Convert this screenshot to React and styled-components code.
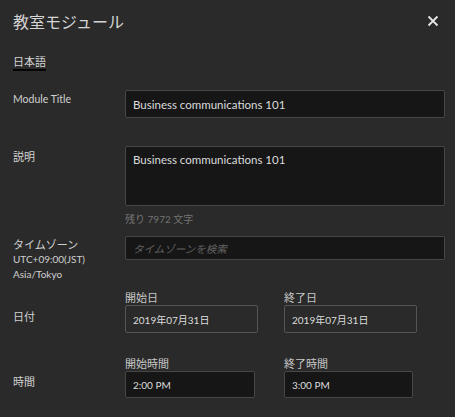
import React from 'react';
import styled, { createGlobalStyle } from 'styled-components';

const Global = createGlobalStyle`
  html, body {
    margin: 0;
    padding: 0;
    background: #2a2a2a;
  }
  body {
    font-family: Lato, "Noto Sans CJK JP", sans-serif;
    color: #d2d2d2;
  }
`;

const Modal = styled.div`
  width: 455px;
  height: 417px;
  box-sizing: border-box;
  padding: 0 10px 0 13px;
  background: #2a2a2a;
  overflow: hidden;
`;

const Header = styled.div`
  display: flex;
  justify-content: space-between;
  align-items: center;
  height: 40px;
  padding-top: 1px;
`;

const Title = styled.h1`
  margin: 0;
  font-family: "Noto Sans CJK JP", sans-serif;
  font-weight: 400;
  font-size: 16px;
  color: #d4d4d4;
`;

const Close = styled.button`
  border: 0;
  background: none;
  padding: 0;
  margin-right: 6px;
  width: 12px;
  height: 12px;
  display: flex;
  color: #e6e6e6;
  cursor: pointer;
`;

const Tabs = styled.div`
  display: flex;
  margin-top: 13px;
`;

const Tab = styled.div`
  font-family: "Noto Sans CJK JP", sans-serif;
  font-size: 11px;
  line-height: 14px;
  padding-bottom: 1px;
  border-bottom: 2px solid #050505;
  color: #d4d4d4;
`;

const Row = styled.div`
  display: grid;
  grid-template-columns: 112px 320px;
  align-items: ${p => (p.center ? 'end' : 'start')};
  margin-top: ${p => p.gap}px;
`;

const Label = styled.div`
  font-size: ${p => (p.jp ? 11 : 10.5)}px;
  line-height: 16px;
  padding-top: ${p => p.top || 0}px;
  padding-bottom: ${p => p.bottom || 0}px;
  color: #d0d0d0;
  font-family: ${p => (p.jp ? '"Noto Sans CJK JP", sans-serif' : 'Lato, "Noto Sans CJK JP", sans-serif')};
`;

const SubInfo = styled.div`
  font-size: 10px;
  line-height: 15px;
  color: #d0d0d0;
`;

const Field = styled.div`
  box-sizing: border-box;
  height: ${p => p.h || 28}px;
  width: ${p => p.w || 320}px;
  padding: ${p => (p.tall ? '6px 7px' : '0 7px')};
  display: flex;
  align-items: ${p => (p.tall ? 'flex-start' : 'center')};
  background: ${p => (p.light ? '#2a2a2a' : '#161616')};
  border: 1px solid ${p => (p.light ? '#555' : '#474747')};
  border-radius: 2px;
  font-size: ${p => p.fs || 11.5}px;
  color: #dcdcdc;
  font-family: Lato, "Noto Sans CJK JP", sans-serif;
`;

const Placeholder = styled.span`
  color: #626262;
  font-style: italic;
  font-family: "Noto Sans CJK JP", sans-serif;
  font-size: 10.5px;
`;

const Counter = styled.div`
  margin-top: 5px;
  font-size: 10px;
  color: #737373;
  font-family: Lato, "Noto Sans CJK JP", sans-serif;
`;

const Pair = styled.div`
  display: flex;
  gap: ${p => p.spacing}px;
`;

const Sub = styled.div`
  display: flex;
  flex-direction: column;
`;

const SubLabel = styled.div`
  font-family: "Noto Sans CJK JP", sans-serif;
  font-size: 11px;
  line-height: 14px;
  margin-bottom: 1px;
  color: #c8c8c8;
`;

export default function App() {
  return (
    <>
      <Global />
      <Modal>
        <Header>
          <Title>教室モジュール</Title>
          <Close aria-label="close">
            <svg width="12" height="12" viewBox="0 0 12 12">
              <path d="M1.5 1.5 L10.5 10.5 M10.5 1.5 L1.5 10.5" stroke="currentColor" strokeWidth="1.8" />
            </svg>
          </Close>
        </Header>

        <Tabs>
          <Tab>日本語</Tab>
        </Tabs>

        <Row gap={19}>
          <Label top={1}>Module Title</Label>
          <Field>Business communications 101</Field>
        </Row>

        <Row gap={28}>
          <Label jp top={2}>説明</Label>
          <div>
            <Field tall h={60}>Business communications 101</Field>
            <Counter>残り 7972 文字</Counter>
          </div>
        </Row>

        <Row gap={10}>
          <div>
            <Label jp>タイムゾーン</Label>
            <SubInfo>UTC+09:00(JST)</SubInfo>
            <SubInfo>Asia/Tokyo</SubInfo>
          </div>
          <Field h={24}>
            <Placeholder>タイムゾーンを検索</Placeholder>
          </Field>
        </Row>

        <Row gap={8} center>
          <Label jp bottom={9}>日付</Label>
          <Pair spacing={26}>
            <Sub>
              <SubLabel>開始日</SubLabel>
              <Field light w={133} fs={10}>2019年07月31日</Field>
            </Sub>
            <Sub>
              <SubLabel>終了日</SubLabel>
              <Field light w={133} fs={10}>2019年07月31日</Field>
            </Sub>
          </Pair>
        </Row>

        <Row gap={23} center>
          <Label jp bottom={9}>時間</Label>
          <Pair spacing={29}>
            <Sub>
              <SubLabel>開始時間</SubLabel>
              <Field w={130} h={27} fs={10}>2:00 PM</Field>
            </Sub>
            <Sub>
              <SubLabel>終了時間</SubLabel>
              <Field w={129} h={27} fs={10}>3:00 PM</Field>
            </Sub>
          </Pair>
        </Row>
      </Modal>
    </>
  );
}
